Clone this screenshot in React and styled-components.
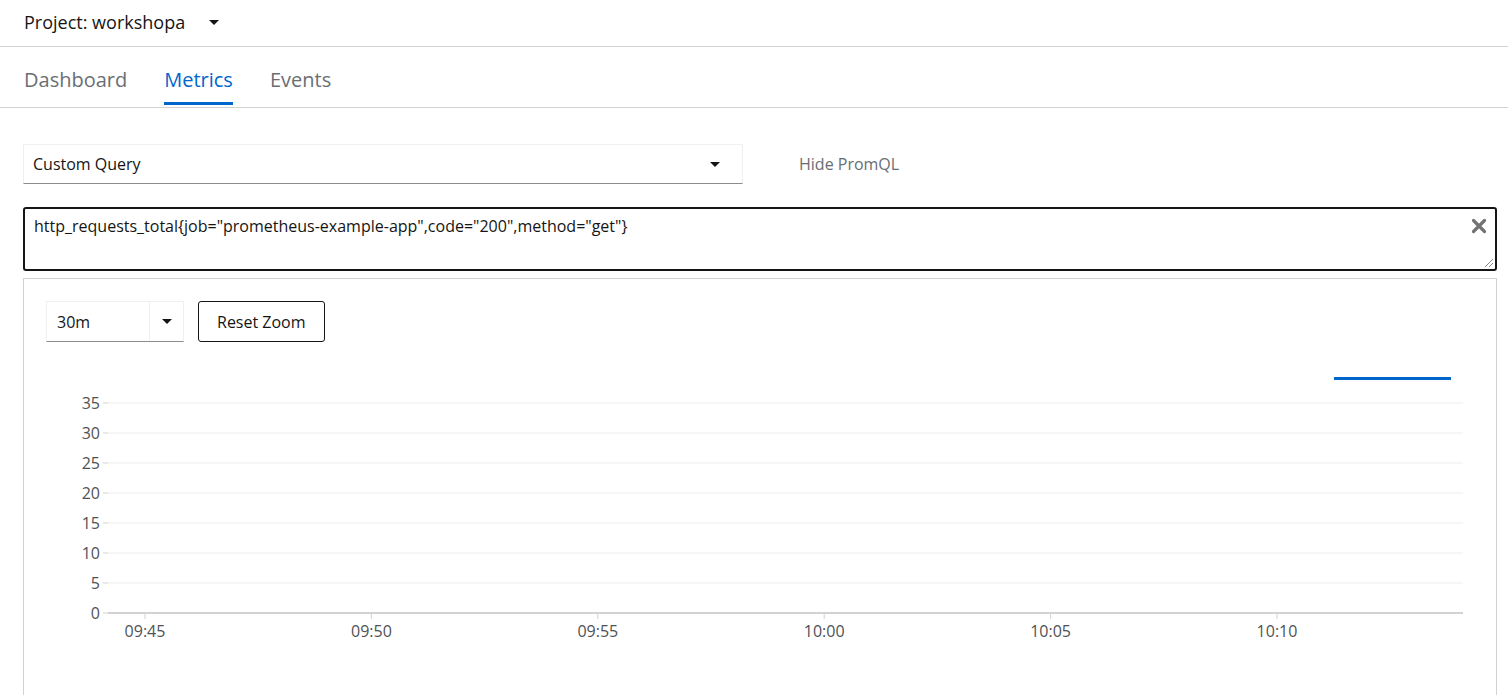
import styled, { createGlobalStyle } from "styled-components";

const GlobalStyle = createGlobalStyle`
  html, body {
    margin: 0;
    padding: 0;
    background: #fff;
    font-family: "Open Sans", "Liberation Sans", sans-serif;
    color: #151515;
  }
  * { box-sizing: border-box; }
`;

const Page = styled.div`
  width: 1508px;
  height: 695px;
  overflow: hidden;
`;

const ProjectBar = styled.div`
  height: 47px;
  display: flex;
  align-items: center;
  padding-left: 24px;
  border-bottom: 1px solid #d2d2d2;
  font-size: 18px;
  gap: 24px;
  padding-bottom: 2px;
`;

const Caret = styled.span`
  display: inline-block;
  width: 0;
  height: 0;
  border-left: ${(p) => p.size || 5}px solid transparent;
  border-right: ${(p) => p.size || 5}px solid transparent;
  border-top: ${(p) => p.size || 5}px solid #151515;
`;

const Tabs = styled.div`
  display: flex;
  gap: 37px;
  padding-left: 24px;
  height: 61px;
  border-bottom: 1px solid #d2d2d2;
`;

const Tab = styled.div`
  display: flex;
  align-items: center;
  font-size: 20px;
  color: ${(p) => (p.active ? "#0066cc" : "#6a6e73")};
  border-bottom: 3px solid ${(p) => (p.active ? "#0066cc" : "transparent")};
  padding-top: 10px;
  margin-bottom: 2px;
`;

const Content = styled.div`
  padding: 36px 11px 0 23px;
`;

const QueryRow = styled.div`
  display: flex;
  align-items: center;
  gap: 56px;
`;

const Select = styled.div`
  width: 720px;
  height: 40px;
  display: flex;
  align-items: center;
  justify-content: space-between;
  padding: 0 22px 0 9px;
  border: 1px solid #f0f0f0;
  border-bottom-color: #8a8d90;
  font-size: 16px;
`;

const LinkText = styled.span`
  font-size: 16px;
  color: #6a6e73;
`;

const QueryBox = styled.div`
  position: relative;
  margin-top: 23px;
  height: 64px;
  border: 2px solid #151515;
  border-radius: 3px;
  padding: 6px 9px;
  font-size: 16px;
`;

const ClearButton = styled.span`
  position: absolute;
  right: 8px;
  top: 9px;
  display: flex;
`;

const Grip = styled.span`
  position: absolute;
  right: 1px;
  bottom: 1px;
  display: flex;
`;

const Panel = styled.div`
  margin-top: 7px;
  height: 420px;
  border: 1px solid #d2d2d2;
  border-bottom: none;
  padding: 22px 0 0 22px;
`;

const Controls = styled.div`
  display: flex;
  gap: 14px;
`;

const Dropdown = styled.div`
  width: 138px;
  height: 41px;
  display: flex;
  border: 1px solid #f0f0f0;
  border-bottom-color: #8a8d90;
  font-size: 16px;
`;

const DropdownValue = styled.div`
  flex: 1;
  display: flex;
  align-items: center;
  padding-left: 10px;
`;

const DropdownToggle = styled.div`
  width: 34px;
  display: flex;
  align-items: center;
  justify-content: center;
  border-left: 1px solid #f0f0f0;
`;

const Button = styled.div`
  height: 41px;
  padding: 0 18px;
  display: flex;
  align-items: center;
  border: 1px solid #151515;
  border-radius: 3px;
  font-size: 16px;
`;

const ChartWrap = styled.div`
  margin-left: -46px;
`;

const yTicks = [0, 5, 10, 15, 20, 25, 30, 35];
const xTicks = ["09:45", "09:50", "09:55", "10:00", "10:05", "10:10"];

function Chart() {
  const left = 108;
  const right = 1463;
  const y0 = 613;
  const step = 30;
  const top = 342; // page y of the svg's top edge
  return (
    <svg width="1485" height="340" viewBox={`0 ${top} 1485 340`}>
      <line x1="1334" y1="378.5" x2="1451" y2="378.5" stroke="#0066cc" strokeWidth="3" />
      {yTicks.map((v, i) => {
        const y = y0 - i * step;
        return (
          <g key={v}>
            <line x1={left} y1={y} x2={right} y2={y} stroke="#ededed" strokeWidth="1" />
            <line x1={left - 5} y1={y} x2={left} y2={y} stroke="#d2d2d2" strokeWidth="1" />
            <text
              x={left - 8}
              y={y + 6}
              textAnchor="end"
              fontSize="16"
              fill="#4f5255"
              fontFamily="Open Sans, Liberation Sans, sans-serif"
            >
              {v}
            </text>
          </g>
        );
      })}
      <line x1={left} y1={y0} x2={right} y2={y0} stroke="#d2d2d2" strokeWidth="2" />
      {xTicks.map((t, i) => {
        const x = 145 + i * 226.4;
        return (
          <g key={t}>
            <line x1={x} y1={y0} x2={x} y2={y0 + 6} stroke="#d2d2d2" strokeWidth="1" />
            <text
              x={x}
              y={y0 + 24}
              textAnchor="middle"
              fontSize="16"
              fill="#4f5255"
              fontFamily="Open Sans, Liberation Sans, sans-serif"
            >
              {t}
            </text>
          </g>
        );
      })}
    </svg>
  );
}

export default function App() {
  return (
    <Page>
      <GlobalStyle />
      <ProjectBar>
        <span>Project: workshopa</span>
        <Caret />
      </ProjectBar>
      <Tabs>
        <Tab>Dashboard</Tab>
        <Tab active>Metrics</Tab>
        <Tab>Events</Tab>
      </Tabs>
      <Content>
        <QueryRow>
          <Select>
            <span>Custom Query</span>
            <Caret />
          </Select>
          <LinkText>Hide PromQL</LinkText>
        </QueryRow>
        <QueryBox>
          http_requests_total{'{'}job="prometheus-example-app",code="200",method="get"{'}'}
          <ClearButton>
            <svg width="16" height="16" viewBox="0 0 16 16">
              <path d="M2.5 2.5 L13.5 13.5 M13.5 2.5 L2.5 13.5" stroke="#737373" strokeWidth="3.2" strokeLinecap="round" />
            </svg>
          </ClearButton>
          <Grip>
            <svg width="11" height="11" viewBox="0 0 11 11">
              <path d="M10 2 L2 10 M10 6 L6 10" stroke="#8a8a8a" strokeWidth="1" />
            </svg>
          </Grip>
        </QueryBox>
        <Panel>
          <Controls>
            <Dropdown>
              <DropdownValue>30m</DropdownValue>
              <DropdownToggle>
                <Caret />
              </DropdownToggle>
            </Dropdown>
            <Button>Reset Zoom</Button>
          </Controls>
          <ChartWrap>
            <Chart />
          </ChartWrap>
        </Panel>
      </Content>
    </Page>
  );
}
